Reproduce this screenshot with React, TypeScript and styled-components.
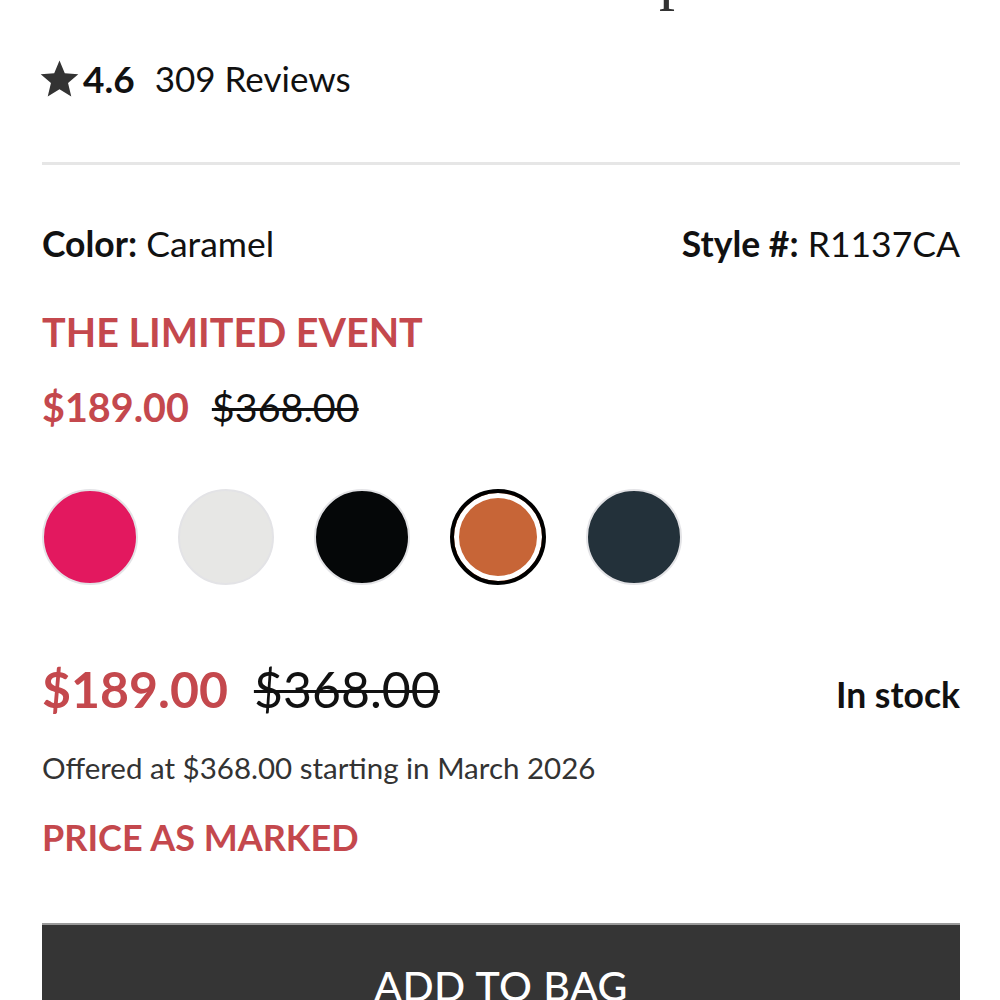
import React from "react";
import styled, { createGlobalStyle } from "styled-components";

const Global = createGlobalStyle`
  html, body { margin: 0; padding: 0; background: #fff; }
  body { font-family: Lato, "Noto Sans", sans-serif; color: #111; }
`;

const Page = styled.div`
  width: 1000px;
  height: 1000px;
  overflow: hidden;
  box-sizing: border-box;
  padding: 0 40px 0 42px;
`;

const TitleClip = styled.div`
  height: 18px;
  overflow: hidden;
`;

const Title = styled.h1`
  margin: 0;
  margin-top: -62px;
  padding-left: 617px;
  font-family: "Liberation Serif", "DejaVu Serif", serif;
  font-weight: 400;
  font-size: 64px;
  line-height: 76px;
  color: #333;
`;

const RatingRow = styled.div`
  display: flex;
  align-items: center;
  margin-top: 36px;
  height: 48px;
`;

const StarIcon = styled.svg`
  margin-left: -3px;
  flex: none;
`;

const Score = styled.span`
  font-weight: 700;
  font-size: 37px;
  margin-left: 3px;
  margin-right: 20px;
`;

const Reviews = styled.span`
  font-size: 35px;
  font-weight: 400;
`;

const Divider = styled.hr`
  border: none;
  height: 3px;
  background: #e6e6e6;
  margin: 60px 0 0;
`;

const InfoRow = styled.div`
  display: flex;
  justify-content: space-between;
  align-items: baseline;
  margin-top: 57px;
  font-size: 35.5px;
  line-height: 44px;
`;

const Label = styled.span`
  font-weight: 700;
`;

const RedHeading = styled.div<{ $mt: number; $size: number }>`
  color: #c4484d;
  font-weight: 700;
  font-size: ${(p) => p.$size}px;
  line-height: ${(p) => Math.round(p.$size * 1.22)}px;
  margin-top: ${(p) => p.$mt}px;
`;

const PriceRow = styled.div<{ $size: number; $mt: number; $gap: number }>`
  display: flex;
  align-items: baseline;
  gap: ${(p) => p.$gap}px;
  font-size: ${(p) => p.$size}px;
  line-height: ${(p) => Math.round(p.$size * 1.2)}px;
  margin-top: ${(p) => p.$mt}px;
`;

const Sale = styled.span`
  color: #c4484d;
  font-weight: 700;
`;

const Original = styled.span`
  color: #111;
  text-decoration: line-through;
  text-decoration-thickness: 0.065em;
`;

const Stock = styled.span`
  margin-left: auto;
  font-weight: 700;
  font-size: 35.5px;
`;

const Swatches = styled.div`
  display: flex;
  gap: 40px;
  margin-top: 59px;
`;

const Swatch = styled.div<{ $color: string; $selected?: boolean }>`
  width: 96px;
  height: 96px;
  border-radius: 50%;
  box-sizing: border-box;
  flex: none;
  background: ${(p) => p.$color};
  border: ${(p) => (p.$selected ? "4px solid #000" : "2px solid #e3e3e6")};
  box-shadow: ${(p) => (p.$selected ? "inset 0 0 0 5px #fff" : "none")};
`;

const Offered = styled.div`
  margin-top: 25px;
  font-size: 29.5px;
  color: #333;
  line-height: 36px;
`;

const AddButton = styled.button`
  display: flex;
  justify-content: center;
  align-items: flex-start;
  width: 100%;
  height: 120px;
  margin-top: 64px;
  background: #353535;
  border: none;
  border-top: 2px solid #9a9a9a;
  color: #fff;
  font-family: Lato, "Noto Sans", sans-serif;
  font-size: 41px;
  font-weight: 500;
  letter-spacing: 0.5px;
  padding-top: 36px;
`;

const Star = () => (
  <StarIcon width="41" height="41" viewBox="0 0 24 24">
    <path
      d="M12 1.5l3.1 7.4 7.9.6-6 5.2 1.9 7.8L12 18.3l-6.9 4.2L7 14.7 1 9.5l7.9-.6z"
      fill="#333"
    />
  </StarIcon>
);

const colors = [
  { c: "#e3185f" },
  { c: "#e7e7e5" },
  { c: "#050708" },
  { c: "#c76537", selected: true },
  { c: "#23313a" },
];

export default function App() {
  return (
    <>
      <Global />
      <Page>
        <TitleClip>
          <Title>p</Title>
        </TitleClip>
        <RatingRow>
          <Star />
          <Score>4.6</Score>
          <Reviews>309 Reviews</Reviews>
        </RatingRow>
        <Divider />
        <InfoRow>
          <span>
            <Label>Color:</Label> Caramel
          </span>
          <span>
            <Label>Style #:</Label> R1137CA
          </span>
        </InfoRow>
        <RedHeading $mt={42} $size={39.5}>THE LIMITED EVENT</RedHeading>
        <PriceRow $size={39.5} $mt={27} $gap={23}>
          <Sale>$189.00</Sale>
          <Original>$368.00</Original>
        </PriceRow>
        <Swatches>
          {colors.map((s, i) => (
            <Swatch key={i} $color={s.c} $selected={s.selected} />
          ))}
        </Swatches>
        <PriceRow $size={50} $mt={74} $gap={26}>
          <Sale>$189.00</Sale>
          <Original>$368.00</Original>
          <Stock>In stock</Stock>
        </PriceRow>
        <Offered>Offered at $368.00 starting in March 2026</Offered>
        <RedHeading $mt={29} $size={36}>PRICE AS MARKED</RedHeading>
        <AddButton>ADD TO BAG</AddButton>
      </Page>
    </>
  );
}
